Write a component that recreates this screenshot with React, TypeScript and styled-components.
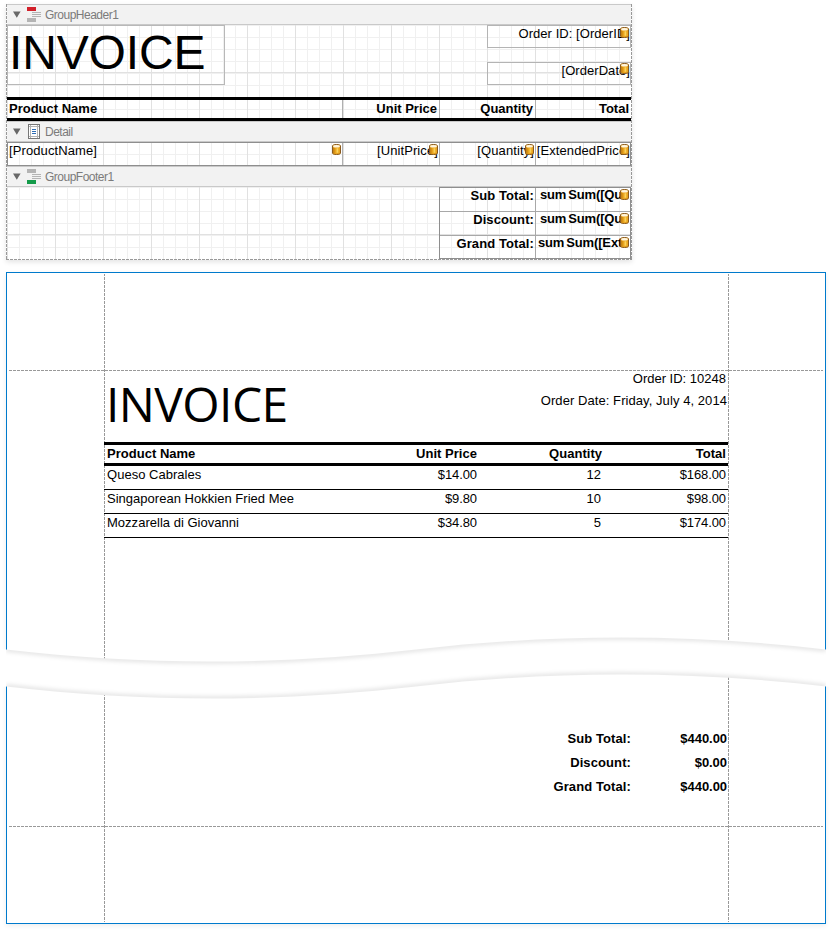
import React from 'react';
import styled, { createGlobalStyle, css } from 'styled-components';

const GlobalStyle = createGlobalStyle`
  * { box-sizing: border-box; }
  body { margin: 0; background: #fff; color: #000; font: 13px/15px "Liberation Sans", Arial, sans-serif; }
`;

const dashX = 'linear-gradient(to right, #999 0 3px, transparent 3px 4px)';
const dashY = 'linear-gradient(to bottom, #999 0 3px, transparent 3px 4px)';

const Page = styled.main`
  position: relative;
  width: 832px;
  height: 931px;
  padding: 4px 6px 0;
  overflow: hidden;
`;

/* ---------- report designer ---------- */

const Designer = styled.section`
  width: 626px;
  height: 256px;
  padding: 0 1px 1px;
  background:
    ${dashY} 0 0 / 1px 4px repeat-y,
    ${dashY} 100% 0 / 1px 4px repeat-y,
    ${dashX} 0 100% / 4px 1px repeat-x,
    #fff;
  box-shadow: 0 2px 5px rgba(0, 0, 0, 0.11);
`;

const Band = styled.header`
  display: flex;
  align-items: center;
  height: 21px;
  padding-left: 6px;
  border: solid #c9c9c9;
  border-width: 1px 0;
  background: #f2f2f2;
  color: #7b7b7b;
  font-size: 12px;
  line-height: 19px;
  letter-spacing: -0.5px;
`;

const BandName = styled.span`
  padding-top: 1px;
`;

const BandIcon = styled.svg`
  width: 15px;
  height: 17px;
  margin: 0 3px 0 6px;
`;

const gridLines = css`
  background-color: #fff;
  background-image:
    linear-gradient(to right, #e1e1e1 1px, transparent 1px),
    linear-gradient(to bottom, #e1e1e1 1px, transparent 1px),
    linear-gradient(to right, #f0f0f0 1px, transparent 1px),
    linear-gradient(to bottom, #f0f0f0 1px, transparent 1px);
  background-size: 48px 100%, 100% 48px, 12px 100%, 100% 12px;
  background-position: 0 0, 0 -1px, 0 0, 0 0;
  background-origin: border-box;
`;

const HeaderArea = styled.div`
  ${gridLines}
  display: flex;
  justify-content: space-between;
  height: 72px;
`;

const TitleField = styled.div`
  width: 218px;
  height: 60px;
  padding-left: 1px;
  border: 1px solid #b8b8b8;
  font-size: 48px;
  line-height: 54px;
  letter-spacing: -0.15px;
`;

const FieldStack = styled.div`
  display: flex;
  flex-direction: column;
  gap: 14px;
  width: 144px;
`;

const Field = styled.div`
  position: relative;
  height: 23px;
  border: 1px solid #b4b4b4;
  text-align: right;
  letter-spacing: 0.05px;
`;

const Columns = styled.div`
  ${gridLines}
  display: grid;
  grid-template-columns: 336px 97px 96px 95px;
  height: 24px;
`;

const HeadColumns = styled(Columns)`
  border: solid #000;
  border-width: 3px 0;
  font-weight: bold;
`;

const DetailColumns = styled(Columns)`
  border: 1px solid #8e8e8e;
  grid-template-columns: 335px 97px 96px 94px;
  letter-spacing: 0.1px;
`;

const Cell = styled.div<{ $left?: boolean; $top?: number }>`
  position: relative;
  padding: ${p => p.$top ?? 0}px 2px 0;
  padding-left: ${p => (p.$left ? 2 : 0)}px;
  text-align: ${p => (p.$left ? 'left' : 'right')};
  white-space: nowrap;
  border-right: 1px solid #b0b0b0;
  &:last-child { border-right: 0; }
`;

const DetailCell = styled(Cell)`
  padding-top: 0;
  padding-right: 1px;
  padding-left: ${p => (p.$left ? 1 : 0)}px;
  &:last-child { padding-right: 0; }
`;

const FooterArea = styled.div`
  ${gridLines}
  display: flex;
  justify-content: flex-end;
  height: 72px;
`;

const TotalsGrid = styled.div`
  display: grid;
  grid-template-columns: 96px 94px;
  grid-template-rows: 24px 24px 22px;
  width: 192px;
  border: 1px solid #8e8e8e;
  font-weight: bold;
`;

const TotalLabel = styled.div`
  padding: 0 1px;
  text-align: right;
  letter-spacing: 0.1px;
  border-right: 1px solid #a8a8a8;
  border-bottom: 1px solid #a8a8a8;
  &:nth-last-child(2) { border-bottom: 0; }
`;

const TotalValue = styled.div<{ $indent: number }>`
  position: relative;
  display: flex;
  gap: 2px;
  margin-top: -1px;
  padding-left: ${p => p.$indent}px;
  overflow: hidden;
  white-space: nowrap;
  letter-spacing: -0.15px;
  border-bottom: 1px solid #a8a8a8;
  &:last-child { border-bottom: 0; }
`;

const DbIcon = styled.svg<{ $right?: number; $top?: number }>`
  position: absolute;
  top: ${p => p.$top ?? 1}px;
  right: ${p => p.$right ?? 1}px;
  width: 9px;
  height: 11px;
`;

function Database({ right, top }: { right?: number; top?: number }) {
  return (
    <DbIcon viewBox="0 0 9 11" $right={right} $top={top}>
      <path d="M.5 2C.5 1 2 .5 4.5.5s4 .5 4 1.5v7c0 1-1.5 1.5-4 1.5S.5 10 .5 9z" fill="#eaa51f" stroke="#8a5a1e" />
      <path d="M1 3.8h1.6v5.7L1 9z" fill="#c98512" />
      <path d="M4.5 4.2h1.8v4.6H4.5z" fill="#fbd35c" />
      <ellipse cx="4.5" cy="2.2" rx="3.4" ry="1.3" fill="#fff6e0" />
    </DbIcon>
  );
}

function Arrow() {
  return <svg width="8" height="7" viewBox="0 0 8 7"><path d="M0 .5h7.6L3.8 6.8z" fill="#686868" /></svg>;
}

function GroupIcon({ top, bottom }: { top: string; bottom: string }) {
  return (
    <BandIcon viewBox="0 0 15 17" shapeRendering="crispEdges">
      <path d="M0 1h9v4H0z" fill={top} />
      <path d="M5 6h9v1H5zM5 8h9v1H5zM5 10h9v1H5z" fill="#b4b4b4" />
      <path d="M0 12h9v4H0z" fill={bottom} />
    </BandIcon>
  );
}

function DetailIcon() {
  return (
    <BandIcon viewBox="0 0 15 17" shapeRendering="crispEdges">
      <path d="M1.5 1.5h11v14h-11z" fill="#fff" stroke="#777" />
      <path d="M3.5 2v13M10.5 2v13M2 3.5h10M2 13.5h10" stroke="#b4b4b4" />
      <path d="M5 6h4v1H5zM5 8h4v1H5zM5 10h4v1H5z" fill="#2f6db5" />
    </BandIcon>
  );
}

/* ---------- report preview ---------- */

const Preview = styled.section`
  width: 820px;
  height: 652px;
  margin-top: 12px;
  padding: 1px 2px;
  border: 1px solid #007acc;
  background:
    ${dashY} 97px 0 / 1px 4px repeat-y,
    ${dashY} 721px 0 / 1px 4px repeat-y,
    ${dashX} 2px 97px / 4px 1px repeat-x,
    ${dashX} 2px 553px / 4px 1px repeat-x,
    #fff;
  background-origin: padding-box;
  background-clip: content-box;
  box-shadow: 0 2px 5px rgba(0, 0, 0, 0.07);
`;

const Sheet = styled.div`
  width: 624px;
  margin: 97px 0 0 95px;
`;

const Masthead = styled.div`
  display: flex;
  justify-content: space-between;
  height: 71px;
`;

const PreviewTitle = styled.h1`
  margin: 0;
  padding-left: 2px;
  font: 48px/66px "Open Sans", sans-serif;
  letter-spacing: -0.6px;
`;

const OrderInfo = styled.div`
  display: flex;
  flex-direction: column;
  gap: 7px;
  text-align: right;
`;

const InfoLine = styled.div<{ $spacing?: number; $inset: number }>`
  padding-right: ${p => p.$inset}px;
  letter-spacing: ${p => p.$spacing ?? 0}px;
`;

const PreviewRow = styled.div`
  display: grid;
  grid-template-columns: 250px 125px 125px 124px;
  height: 24px;
  border-bottom: 1px solid #000;
`;

const PreviewHead = styled(PreviewRow)`
  border-top: 3px solid #000;
  border-bottom-width: 3px;
  font-weight: bold;
`;

const PreviewCell = styled.div<{ $left?: boolean; $inset?: number; $money?: boolean }>`
  padding: 1px ${p => p.$inset ?? 2}px 0 3px;
  text-align: ${p => (p.$left ? 'left' : 'right')};
  white-space: nowrap;
  letter-spacing: ${p => (p.$money ? -0.1 : 0.02)}px;
`;

const Summary = styled.div`
  display: grid;
  grid-template-columns: 527px 97px;
  grid-auto-rows: 24px;
  margin-top: 193px;
  font-weight: bold;
  text-align: right;
`;

const SummaryLabel = styled.div`
  letter-spacing: 0.1px;
`;

const SummaryValue = styled.div`
  padding-right: 1px;
  letter-spacing: -0.05px;
`;

const Tear = styled.svg`
  position: absolute;
  left: 0;
  top: 620px;
  width: 832px;
  height: 100px;
`;

const upperEdge = 'M6 29.5C142 45.5 280 45.5 416 29.5S690 13.5 826 29.5';
const lowerEdge = 'M6 66.5C142 82.5 280 82.5 416 66.5S690 50.5 826 66.5';
const gap = `${upperEdge}V66.5C690 50.5 552 50.5 416 66.5S142 82.5 6 66.5z`;

const products = [
  ['Queso Cabrales', '$14.00', '12', '$168.00'],
  ['Singaporean Hokkien Fried Mee', '$9.80', '10', '$98.00'],
  ['Mozzarella di Giovanni', '$34.80', '5', '$174.00'],
];

const totals = [
  ['Sub Total:', '$440.00'],
  ['Discount:', '$0.00'],
  ['Grand Total:', '$440.00'],
];

const totalFields = [
  { label: 'Sub Total:', expr: 'Sum([Qu', indent: 4 },
  { label: 'Discount:', expr: 'Sum([Qu', indent: 4 },
  { label: 'Grand Total:', expr: 'Sum([Ext', indent: 2 },
];

export default function App() {
  return (
    <Page>
      <GlobalStyle />
      <Designer>
        <Band><Arrow /><GroupIcon top="#d2202a" bottom="#b4b4b4" /><BandName>GroupHeader1</BandName></Band>
        <HeaderArea>
          <TitleField>INVOICE</TitleField>
          <FieldStack>
            <Field>Order ID: [OrderID]<Database /></Field>
            <Field>[OrderDate]<Database top={0} /></Field>
          </FieldStack>
        </HeaderArea>
        <HeadColumns>
          <Cell $left $top={1}>Product Name</Cell>
          <Cell $top={1}>Unit Price</Cell>
          <Cell $top={1}>Quantity</Cell>
          <Cell $top={1}>Total</Cell>
        </HeadColumns>
        <Band><Arrow /><DetailIcon /><BandName>Detail</BandName></Band>
        <DetailColumns>
          <DetailCell $left>[ProductName]<Database /></DetailCell>
          <DetailCell>[UnitPrice]<Database /></DetailCell>
          <DetailCell>[Quantity]<Database /></DetailCell>
          <DetailCell>[ExtendedPrice]<Database /></DetailCell>
        </DetailColumns>
        <Band><Arrow /><GroupIcon top="#b4b4b4" bottom="#149b4a" /><BandName>GroupFooter1</BandName></Band>
        <FooterArea>
          <TotalsGrid>
            {totalFields.map(t => (
              <React.Fragment key={t.label}>
                <TotalLabel>{t.label}</TotalLabel>
                <TotalValue $indent={t.indent}><span>sum</span><span>{t.expr}</span><Database top={2} /></TotalValue>
              </React.Fragment>
            ))}
          </TotalsGrid>
        </FooterArea>
      </Designer>

      <Preview>
        <Sheet>
          <Masthead>
            <PreviewTitle>INVOICE</PreviewTitle>
            <OrderInfo>
              <InfoLine $inset={2}>Order ID: 10248</InfoLine>
              <InfoLine $inset={1} $spacing={0.07}>Order Date: Friday, July 4, 2014</InfoLine>
            </OrderInfo>
          </Masthead>
          <PreviewHead>
            <PreviewCell $left>Product Name</PreviewCell>
            <PreviewCell>Unit Price</PreviewCell>
            <PreviewCell>Quantity</PreviewCell>
            <PreviewCell>Total</PreviewCell>
          </PreviewHead>
          {products.map(([name, price, quantity, total]) => (
            <PreviewRow key={name}>
              <PreviewCell $left>{name}</PreviewCell>
              <PreviewCell $money>{price}</PreviewCell>
              <PreviewCell $inset={3}>{quantity}</PreviewCell>
              <PreviewCell $money>{total}</PreviewCell>
            </PreviewRow>
          ))}
          <Summary>
            {totals.map(([label, value]) => (
              <React.Fragment key={label}>
                <SummaryLabel>{label}</SummaryLabel>
                <SummaryValue>{value}</SummaryValue>
              </React.Fragment>
            ))}
          </Summary>
        </Sheet>
      </Preview>

      <Tear viewBox="0 0 832 100">
        <defs>
          <clipPath id="gap"><path d={gap} /></clipPath>
          <filter id="soft" x="-5%" y="-100%" width="110%" height="300%"><feGaussianBlur stdDeviation="2" /></filter>
        </defs>
        <path d="M0 29.5H6C142 45.5 280 45.5 416 29.5S690 13.5 826 29.5H832V66.5H826C690 50.5 552 50.5 416 66.5S142 82.5 6 66.5H0z" fill="#fff" />
        <g clipPath="url(#gap)" fill="none" stroke="#000" strokeOpacity=".12" strokeWidth="4">
          <path d={upperEdge} filter="url(#soft)" />
          <path d={lowerEdge} filter="url(#soft)" />
        </g>
      </Tear>
    </Page>
  );
}
